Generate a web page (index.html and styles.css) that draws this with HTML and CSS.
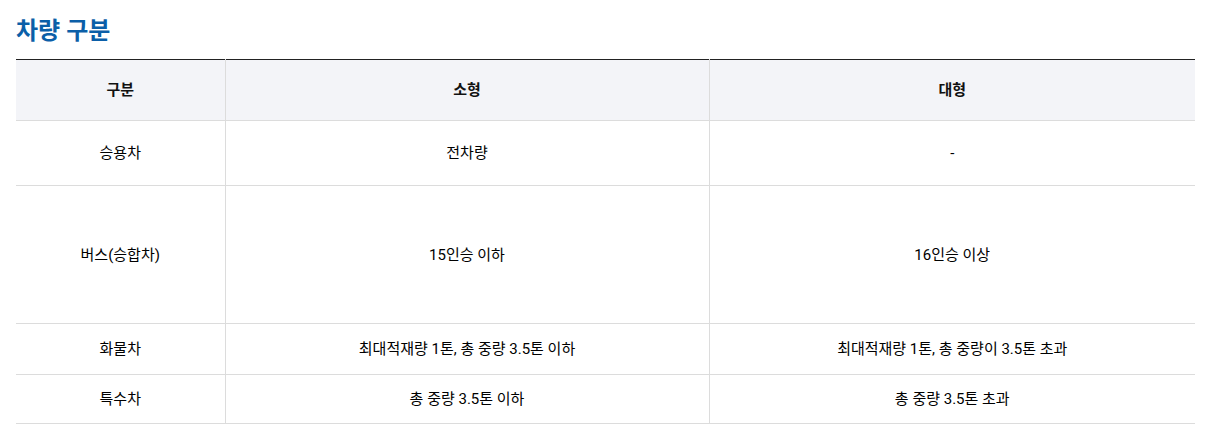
FILE: index.html
```html
<!DOCTYPE html>
<html lang="ko">
<head>
<meta charset="utf-8">
<link rel="stylesheet" href="styles.css">
</head>
<body>
<div class="page">
  <h2 class="title">차량 구분</h2>
  <table class="spec">
    <colgroup>
      <col class="c1"><col class="c2"><col class="c3">
    </colgroup>
    <thead>
      <tr class="r-head"><th>구분</th><th>소형</th><th>대형</th></tr>
    </thead>
    <tbody>
      <tr class="r1"><td>승용차</td><td>전차량</td><td>-</td></tr>
      <tr class="r2"><td>버스(승합차)</td><td>15인승 이하</td><td>16인승 이상</td></tr>
      <tr class="r3"><td>화물차</td><td>최대적재량 1톤, 총 중량 3.5톤 이하</td><td>최대적재량 1톤, 총 중량이 3.5톤 초과</td></tr>
      <tr class="r4"><td>특수차</td><td>총 중량 3.5톤 이하</td><td>총 중량 3.5톤 초과</td></tr>
    </tbody>
  </table>
</div>
</body>
</html>
```
FILE: styles.css
```css
html, body { margin: 0; padding: 0; background: #fff; }
body { font-family: "Noto Sans CJK KR", "Noto Sans", sans-serif; color: #111; }
.page { padding: 12px 13px 0 16px; }
.title {
  margin: 0 0 14px;
  font-size: 24px;
  line-height: 33px;
  font-weight: 700;
  color: #0b5fa8;
  letter-spacing: -0.2px;
}
.spec {
  width: 100%;
  border-collapse: collapse;
  border-top: 1px solid #222;
  table-layout: fixed;
  font-family: Roboto, "Noto Sans CJK KR", sans-serif;
  font-size: 15px;
}
.c1 { width: 209px; }
.c2 { width: 484px; }
.spec th, .spec td {
  border-bottom: 1px solid #dcdcdc;
  border-left: 1px solid #dcdcdc;
  text-align: center;
  vertical-align: middle;
  padding: 0;
  line-height: 20px;
}
.spec th:first-child, .spec td:first-child { border-left: none; }
.spec th { background: #f3f4f8; font-weight: 700; }
.spec td { font-weight: 400; color: #000; }
.r-head th { height: 60px; }
.r1 td { height: 64px; }
.r2 td { height: 137px; }
.r3 td { height: 50px; }
.r4 td { height: 48px; }
```
